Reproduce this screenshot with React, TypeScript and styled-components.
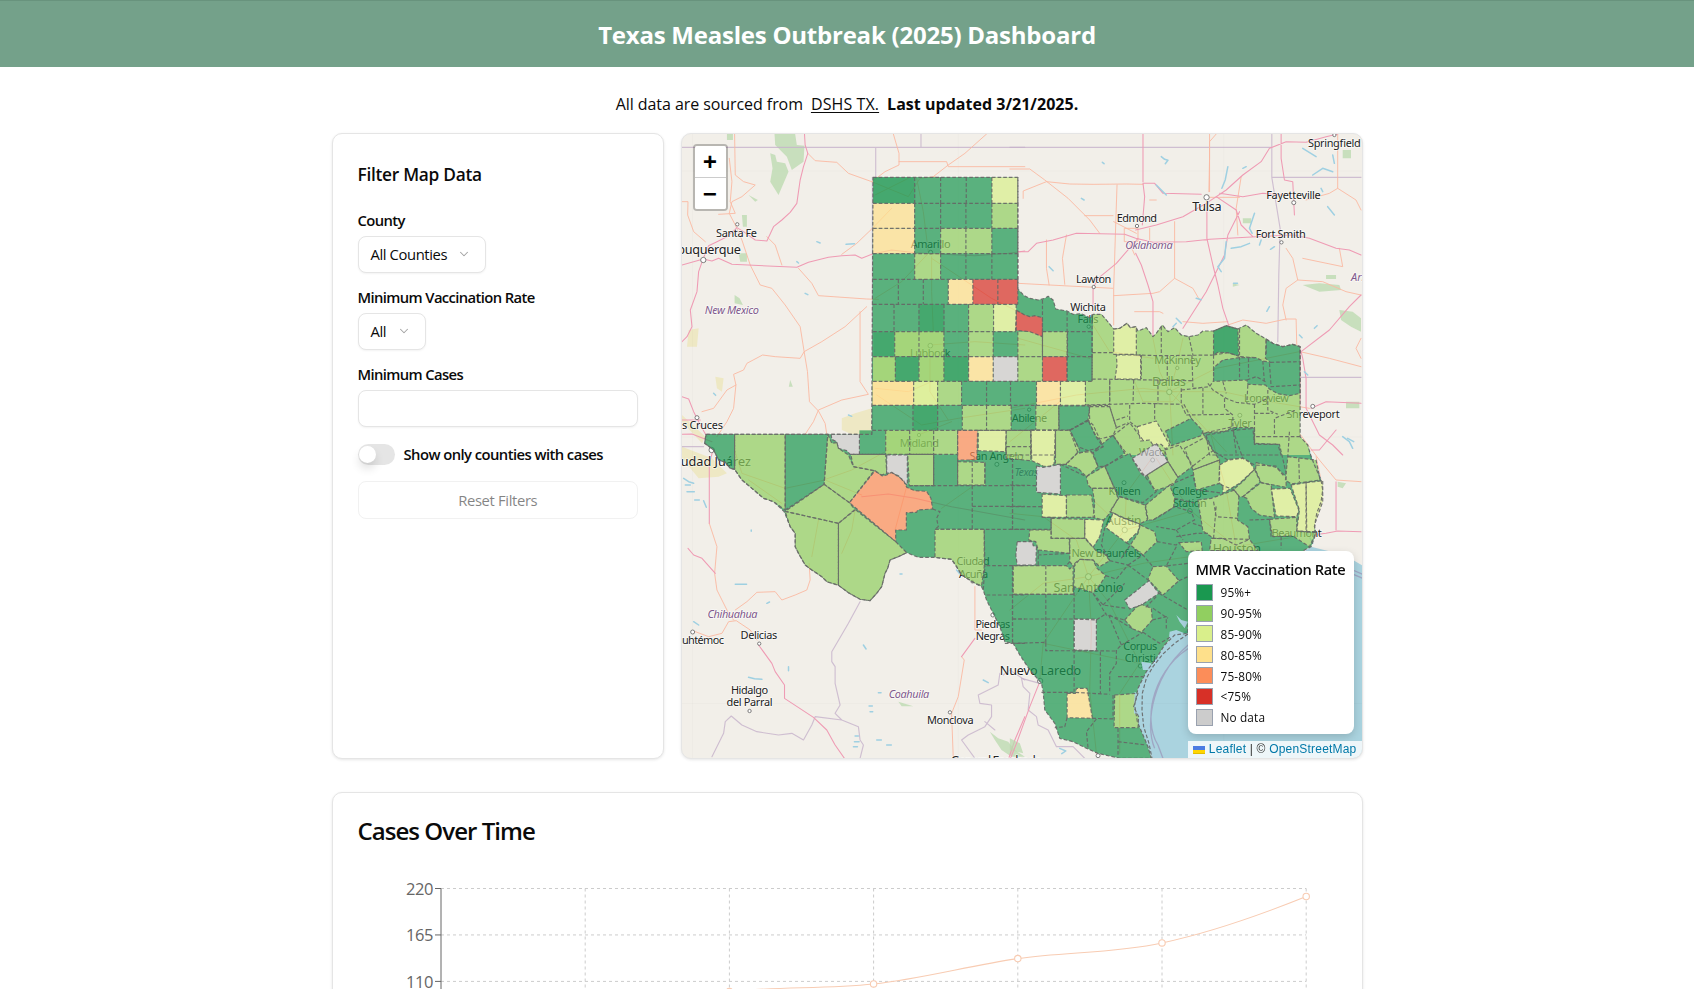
import React from 'react';
import styled, { createGlobalStyle } from 'styled-components';
import { ChevronDown } from 'lucide-react';

const GlobalStyle = createGlobalStyle`
  *, *::before, *::after { box-sizing: border-box; }
  body {
    margin: 0;
    background: #fff;
    color: #0a0a0a;
    font-family: "Segoe UI", "Open Sans", "Noto Sans", sans-serif;
    font-size: 15px;
  }
  button, input { font: inherit; color: inherit; }
`;

const Page = styled.div`
  height: 100vh;
  overflow: hidden;
`;

const Header = styled.header`
  height: 67px;
  display: flex;
  align-items: center;
  justify-content: center;
  padding-top: 1px;
  background: #74a18a;
  border-top: 1px solid #68937d;
  color: #fff;
`;

const Title = styled.h1`
  margin: 0;
  font-size: 24px;
  line-height: 32px;
  font-weight: 700;
  letter-spacing: -0.23px;
  white-space: nowrap;
`;

const Main = styled.main`
  width: 1031px;
  margin: 0 auto;
`;

const Source = styled.p`
  margin: 0;
  height: 66px;
  padding-top: 25px;
  line-height: 24px;
  display: flex;
  justify-content: center;
  gap: 8px;
  font-size: 16px;
  letter-spacing: -0.07px;
  white-space: nowrap;
  b { letter-spacing: 0.02px; }
  a { color: inherit; letter-spacing: 0.1px; text-decoration: underline; text-underline-offset: 2px; }
`;

const Columns = styled.div`
  display: grid;
  grid-template-columns: 332.5px 1fr;
  gap: 16.5px;
  height: 626px;
`;

const Card = styled.section`
  background: #fff;
  border: 1px solid #e5e5e5;
  border-radius: 10px;
  box-shadow: 0 1px 3px rgba(0, 0, 0, 0.1);
`;

const FilterCard = styled(Card)`
  padding: 29px 25px 0;
  display: flex;
  flex-direction: column;
  align-items: flex-start;
`;

const CardHeading = styled.h2`
  margin: 0 0 22px;
  font-size: 17.3px;
  line-height: 24px;
  font-weight: 600;
  letter-spacing: -0.27px;
`;

const Field = styled.div`
  width: 100%;
  height: 77px;
  display: flex;
  flex-direction: column;
  align-items: flex-start;
  gap: 5px;
`;

const Label = styled.label`
  font-size: 14.8px;
  line-height: 22px;
  font-weight: 600;
  letter-spacing: -0.62px;
  white-space: nowrap;
`;

const SwitchLabel = styled(Label)`
  letter-spacing: -0.56px;
`;

const SelectButton = styled.button<{ $width: number }>`
  width: ${(p) => p.$width}px;
  height: 37px;
  padding: 0 14px 1px 12px;
  display: flex;
  align-items: center;
  justify-content: space-between;
  background: #fff;
  border: 1px solid #e5e5e5;
  border-radius: 8px;
  box-shadow: 0 1px 2px rgba(0, 0, 0, 0.05);
  font-size: 14.8px;
  letter-spacing: -0.4px;
  white-space: nowrap;
  svg { color: #a3a3a3; }
`;

const NumberInput = styled.input`
  width: 100%;
  height: 37px;
  border: 1px solid #e5e5e5;
  border-radius: 8px;
  background: #fff;
  box-shadow: 0 1px 2px rgba(0, 0, 0, 0.05);
`;

const SwitchRow = styled.div`
  display: flex;
  align-items: center;
  gap: 9px;
  height: 22px;
  margin-top: 3px;
`;

const Switch = styled.span`
  width: 37px;
  height: 21px;
  padding: 2px 1px;
  border-radius: 11px;
  background: #e5e5e5;
`;

const Thumb = styled.span`
  display: block;
  width: 17px;
  height: 17px;
  border-radius: 50%;
  background: #fff;
  box-shadow: 0 6px 10px rgba(0, 0, 0, 0.12);
`;

const ResetButton = styled.button`
  width: 100%;
  height: 38px;
  margin-top: 16px;
  background: #fff;
  border: 1px solid #e5e5e5;
  border-radius: 8px;
  opacity: 0.5;
  font-size: 14.8px;
  font-weight: 500;
  letter-spacing: -0.35px;
`;

const MapCard = styled(Card)`
  position: relative;
  overflow: hidden;
  background: #f2efe9;
`;

const MapSvg = styled.svg`
  display: block;
  width: 100%;
  height: 100%;
`;

const ZoomControl = styled.div`
  position: absolute;
  top: 10px;
  left: 11px;
  width: 35px;
  border: 2px solid rgba(0, 0, 0, 0.24);
  background-clip: padding-box;
  border-radius: 4px;
  overflow: hidden;
`;

const ZoomButton = styled.button`
  display: flex;
  align-items: center;
  justify-content: center;
  width: 100%;
  height: 31px;
  padding: 4px 0 0;
  border: 0;
  background: #fff;
  font: bold 24px/27px "Liberation Mono", monospace;
  color: #000;
  & + & { border-top: 1px solid #ccc; height: 32px; }
`;

const Legend = styled.div`
  position: absolute;
  right: 8px;
  bottom: 24px;
  width: 166px;
  height: 183px;
  padding: 7px 8px;
  background: #fff;
  border-radius: 8px;
  box-shadow: 0 3px 8px rgba(0, 0, 0, 0.16);
`;

const LegendTitle = styled.div`
  font-size: 14.6px;
  line-height: 22px;
  font-weight: 600;
  letter-spacing: -0.4px;
  margin-bottom: 2px;
  white-space: nowrap;
`;

const LegendRow = styled.div`
  display: flex;
  align-items: center;
  gap: 8px;
  height: 20.8px;
  font-size: 11.8px;
  line-height: 20px;
  letter-spacing: 0.15px;
`;

const Swatch = styled.span<{ $color: string }>`
  width: 17px;
  height: 17px;
  background: ${(p) => p.$color};
  border: 1px solid #99a1af;
`;

const Attribution = styled.div`
  position: absolute;
  right: 0;
  bottom: 0;
  height: 17px;
  padding: 0 5px;
  display: flex;
  align-items: center;
  gap: 4px;
  background: rgba(255, 255, 255, 0.8);
  font: 12px/17px "Liberation Sans", sans-serif;
  letter-spacing: 0.2px;
  color: #333;
  white-space: pre;
  a { color: #0078a8; }
`;

const ChartCard = styled(Card)`
  margin-top: 33px;
  height: 480px;
  padding: 23px 25px;
`;

const ChartTitle = styled.h2`
  margin: 0;
  font-size: 24px;
  line-height: 30px;
  font-weight: 600;
  letter-spacing: -0.95px;
`;

const ChartSvg = styled.svg`
  display: block;
  width: 980px;
  height: 380px;
  margin-top: 27px;
  margin-left: -1px;
  text { font-size: 16.5px; fill: #666; letter-spacing: -0.4px; }
`;

/* ---------- map data ---------- */

// Each sheet covers one quarter of the map, in thirds of a pixel from its origin.
type Sheet = 'nw' | 'ne' | 'sw' | 'se';
const SHEETS: Sheet[] = ['nw', 'ne', 'sw', 'se'];
const ORIGIN: Record<Sheet, [number, number]> = {
  nw: [0, 0],
  ne: [1005, 0],
  sw: [0, 915],
  se: [1005, 915],
};

const RATE: Record<string, string> = {
  g: '#1a9850', D: '#1a9850', l: '#91cf60', L: '#91cf60', y: '#d9ef8b', Y: '#d9ef8b',
  o: '#fee08b', O: '#fee08b', c: '#fc8d59', r: '#d73027', n: '#cccccc',
};

const STATE =
  'M594,157 L1029,157 1029,492 1048,512 1065,520 1090,525 1110,520 1120,514 1135,525 1143,552 1177,558 1195,568 1220,566 1245,578 1255,568 1280,568 1295,585 1317,612 1335,610 1357,595 1367,608 1383,605 1390,618 1415,608 1435,635 1445,625 1463,600 1480,620 1500,608 1520,630 1543,635 1570,630 1585,618 1617,618 1655,602 1690,612 1715,600 1745,625 1775,642 1795,655 1825,665 1855,658 1877,665 1877,935 1900,960 1907,985 1920,1020 1940,1065 1945,1095 1940,1130 1927,1165 1920,1205 1925,1225 1910,1265 1890,1275 1800,1370 1640,1440 1540,1500 1540,1525 1500,1530 1470,1560 1445,1600 1415,1640 1390,1690 1380,1740 1388,1790 1405,1830 1420,1865 1430,1900 1335,1900 1269,1885 1235,1870 1195,1850 1155,1840 1140,1795 1110,1755 1105,1700 1100,1675 1065,1635 1035,1590 1015,1555 990,1550 975,1505 955,1465 935,1425 925,1395 920,1385 900,1375 860,1350 845,1325 830,1303 800,1300 780,1297 730,1297 695,1283 670,1295 645,1305 638,1330 630,1345 620,1385 605,1405 585,1427 555,1423 520,1403 490,1381 455,1370 440,1355 425,1345 410,1335 390,1320 370,1285 360,1265 360,1225 345,1205 327,1160 295,1130 265,1120 230,1090 200,1065 178,1033 165,1030 150,1012 130,1005 115,975 88,955 92,928 590,928 Z';

type Row = [number, number, number[], string];
const GRID: Row[] = [
  [157, 235, [594, 719, 797, 874, 951, 1029], 'Dgggy'],
  [235, 310, [594, 719, 797, 873, 951, 1029], 'ogggl'],
  [310, 386, [594, 719, 797, 873, 951, 1029], 'ogllg'],
  [386, 463, [594, 719, 797, 873, 951, 1029], 'glggg'],
  [463, 538, [594, 670, 745, 820, 894, 969, 1029], 'gggorr'],
  [538, 620, [594, 657, 732, 807, 881, 956, 1024], 'ggDgly'],
  [620, 695, [594, 659, 732, 807, 881, 955, 1029, 1103, 1178, 1252], 'DLLglgllg'],
  [695, 769, [594, 661, 732, 807, 881, 955, 1029, 1103, 1177, 1252], 'LDLDonlrg'],
  [769, 841, [592, 716, 788, 860, 935, 1007, 1085, 1157, 1232, 1305], 'OYlgggoyl'],
  [841, 916, [592, 714, 788, 862, 935, 1009, 1083, 1152], 'gDgllgl'],
  [916, 988, [553, 632, 704, 776, 848], 'gLLl'],
];

const AREAS: Record<Sheet, [string, string][]> = {
  nw: [],
  ne: [
    ['l', '250,568 275,568 290,585 312,612 330,610 352,595 362,608 378,605 385,618 410,608 430,635 440,625 458,600 475,620 495,608 515,630 538,635 565,630 580,618 612,618 650,602 685,612 710,600 740,625 770,642 790,655 820,665 850,658 872,665 872,935 895,960 902,990 137,990 137,916 180,916 240,885 240,845 227,843 227,769 247,769'],
    ['r', '20,556 45,570 60,575 75,572 98,578 98,635 60,620 17,616'],
    ['D', '612,618 650,602 685,612 687,693 655,683 625,682 612,690'],
    ['g', '770,642 790,655 820,665 850,658 872,665 872,805 840,812 805,806 780,792 768,780 715,778 712,765 612,769 612,728 640,705 690,698 740,698 760,708 783,712 768,700'],
    ['y', '312,612 330,610 352,595 362,608 380,605 380,688 312,688'],
    ['y', '320,690 393,690 393,762 316,762 322,720'],
    ['g', '147,843 238,843 240,885 180,916 148,916'],
    ['l', '240,845 300,845 320,908 310,932 270,942 250,900 235,885'],
    ['g', '180,916 235,885 258,935 270,942 280,965 205,985'],
    ['y', '383,905 440,888 455,915 480,960 468,972 455,958 430,960 420,945 393,948'],
    ['g', '468,918 545,880 580,918 575,932 485,962'],
    ['g', '590,930 640,922 670,908 730,908 735,958 805,958 815,990 600,990'],
    ['l', '-11,916 63,916 63,990 -11,990'],
    ['y', '63,916 137,916 137,990 63,990'],
  ],
  sw: [
    ['g', '92,13 178,13 178,118 165,115 150,97 130,90 115,60 88,40'],
    ['l', '178,13 330,13 330,240 295,215 265,205 230,175 200,150 178,118'],
    ['g', '330,13 458,13 447,163 330,240'],
    ['l', '458,13 470,40 485,38 490,55 520,75 535,110 597,122 523,218 447,163'],
    ['l', '527,73 632,73 635,130 620,135 597,122 535,110'],
    ['n', '468,13 553,13 553,73 525,73 515,62 490,55 485,35 470,28'],
    ['n', '635,75 697,75 697,165 690,160 670,137 650,128 635,130'],
    ['l', '698,73 776,73 776,167 703,167'],
    ['c', '848,1 908,1 906,90 848,90'],
    ['y', '910,1 994,1 992,65 910,62'],
    ['l', '848,95 930,97 930,165 848,165'],
    ['c', '600,122 622,138 635,135 650,127 685,150 695,172 720,182 755,184 768,205 773,237 728,240 725,247 694,248 694,300 662,300 662,335 523,218'],
    ['l', '447,163 523,218 540,240 490,280 330,244'],
    ['l', '330,244 490,280 490,466 455,455 440,440 425,430 410,420 390,405 370,370 360,350 360,310 345,290'],
    ['l', '490,280 540,238 662,335 695,368 670,380 645,390 638,415 630,430 620,470 605,490 585,512 555,508 520,488 490,466'],
    ['l', '780,298 928,298 928,410 920,467 900,460 860,435 845,410 830,388 780,382'],
  ],
  se: [
    ['l', '-11,50 63,50 63,92 -11,85'],
    ['y', '63,0 137,0 133,102 120,110 100,108 66,92'],
    ['l', '137,0 180,0 210,60 170,103 137,103'],
    ['n', '80,108 100,112 152,103 152,192 80,187'],
    ['y', '97,192 170,197 170,262 97,262'],
    ['l', '170,195 245,195 255,262 170,262'],
    ['l', '124,265 225,268 225,325 124,325'],
    ['l', '60,300 124,300 124,325 178,325 180,370 85,360 78,335 57,330'],
    ['y', '225,268 282,270 270,320 250,352 225,322'],
    ['l', '248,175 315,175 325,205 300,250 282,270 250,262 255,220'],
    ['l', '330,200 406,225 413,270 390,282 330,258 300,245'],
    ['y', '310,248 330,260 390,282 385,305 350,338 287,292 300,275'],
    ['l', '392,285 435,305 442,335 400,375 362,345 385,310'],
    ['l', '180,325 225,325 250,352 262,365 285,372 300,392 270,410 250,390 210,388 192,410 180,395'],
    ['l', '195,400 210,388 250,390 262,415 288,437 270,465 250,488 192,470'],
    ['l', '10,407 170,407 180,417 190,407 190,493 10,493'],
    ['n', '22,335 68,335 70,347 80,350 78,405 22,405 18,375'],
    ['g', '180,0 235,-30 262,25 280,50 250,68 205,50'],
    ['l', '170,100 205,68 245,65 265,110 230,140 205,115 170,105'],
    ['g', '262,55 310,15 345,70 290,108 265,110 250,68'],
    ['g', '285,108 360,70 370,90 405,138 440,185 400,218 330,200 310,165'],
    ['l', '230,140 285,108 310,165 312,175 245,175 235,165'],
    ['n', '368,85 440,40 475,95 405,140 390,125'],
    ['l', '412,135 475,95 505,142 490,165 435,182'],
    ['l', '408,225 480,165 495,205 492,232 430,270 415,270'],
    ['l', '465,60 510,45 550,108 505,142 475,95'],
    ['l', '525,55 590,20 610,60 630,90 550,120'],
    ['g', '580,10 735,-5 735,40 810,43 830,130 820,135 800,108 735,105 700,85 655,90 610,62'],
    ['l', '550,120 630,90 630,160 560,180'],
    ['y', '630,105 660,88 700,84 720,95 735,118 690,160 640,190 640,165 628,160'],
    ['l', '735,118 752,155 700,200 690,200 672,178 700,155'],
    ['l', '740,98 800,112 830,140 830,172 755,158 738,120'],
    ['l', '565,210 605,205 675,180 688,200 684,270 715,290 720,328 680,345 640,325 612,325 580,303'],
    ['l', '700,200 755,158 785,165 795,262 750,255 725,235 712,205'],
    ['y', '785,177 842,175 868,240 862,260 800,258'],
    ['y', '845,165 890,158 892,305 862,303 870,240'],
    ['y', '890,158 940,152 940,215 917,280 915,305 890,305'],
    ['l', '780,268 862,262 862,303 920,308 900,350 850,318 790,320'],
    ['l', '835,80 920,90 932,150 845,162 828,150'],
    ['l', '605,325 720,328 745,362 600,362'],
    ['l', '508,338 575,335 578,362 530,365'],
    ['l', '430,410 470,408 508,452 460,495 415,448'],
    ['n', '345,510 418,452 448,490 395,525 360,537'],
    ['l', '345,570 380,532 395,523 425,535 428,570 395,607 370,597'],
    ['n', '193,567 260,567 260,662 193,660'],
    ['o', '172,790 197,790 200,775 232,775 248,865 172,863'],
    ['l', '315,795 385,790 372,830 387,860 385,893 313,893'],
  ],
};

// County borders between areas of the same rate.
const BORDERS: Record<Sheet, string> = {
  nw: '',
  ne: 'M98,525V695 M172,560V770 M247,568V769 M98,620H247 M455,605V688 M538,635L550,690 M395,690V762 M473,690V762 M547,690L550,790 M612,690V765 M380,690L450,692 612,690 M247,683H312 M247,762L550,767 M300,765V838 M372,765L370,838 M445,765V838 M227,840L300,838 400,835 515,838 M515,790V838L530,870 M515,795L580,788 M550,790L600,785 612,767 M580,788V870 M530,870L665,868 M595,775L610,795 650,820 680,832 735,838 775,820 M640,770L650,805 M715,780L712,835 M735,838V935H795 M775,795V855L805,868 M735,865L790,865 M872,935H795V880L860,855 M300,845L320,908 355,893 M320,885L355,873 M360,840V890L380,905 M435,838V885 M645,820V850L670,870V905L580,925 M523,838L545,880 M690,695V765 M717,700V755 M760,708L765,775 M780,715L785,785 870,780 M783,712L870,710 M612,690L655,683 687,693 M690,612V695L740,698 M770,642V690 M712,765L740,755 768,770 M670,908L680,985 M310,932L350,985 M310,932L360,893 400,945 M735,940V958',
  sw: 'M703,167H1050 M892,167V298 M892,229H1050 M780,298H1050 M773,237L795,245 785,265 790,290 780,298 M928,298L930,410 925,480 M935,407H1050 M935,495H1050 M1013,85V298 M930,97V165 M1013,407V640 M1013,567H1050 M990,640H1050 M892,97V167 M776,73V167 M848,165V73',
  se: 'M0,165L80,167 M0,230H97 M8,85V298 M0,298H124V262 M97,262H125 M8,407V640 M10,493H193 M108,407V640 M8,567H193 M8,640L108,637V662L320,663 M193,470V785 M95,787H193L300,793 M272,665V790 M297,555L335,645 320,660V700L300,730V790 M250,490L290,555 345,570 M193,567L260,570 290,550 M280,525L345,460 M250,490L280,525 350,535 M355,405L418,452 M355,405L400,375 430,410 M300,392L355,405 M288,437L320,447 355,405 M442,335L500,345 508,338 M152,103L230,140 M285,292L275,345 300,392 M350,338L362,345 335,385 M325,740H400 M248,865L315,867 M260,867L230,905 235,955 M172,863L165,890 135,893 M325,895V980 M325,935L410,945 M430,535L475,565 M448,490L535,540 M400,607L450,640 485,620 M500,350L470,408 535,400 M508,452L535,440 M430,270L465,250 495,230 545,245 555,270 500,300 440,290 M500,300L520,330 M550,280L580,290 M495,205L560,220 M480,165L550,135 560,180 M440,500L405,535 M428,570L470,560V600 M300,555L370,597 M335,645L400,607 M310,795V865 M85,360V407 M180,395L170,407 M180,370L85,375 M675,180L635,165 M612,215L620,260 685,265 M612,325L620,225 M720,270L780,268 785,320 M815,320V355 M868,85L870,155 M735,40V0 M670,0L700,85 M840,5L835,80 M550,108L610,62 M500,320L560,310 600,310 M570,180L640,190 M535,612L495,640 460,672 430,710 410,745 398,790 397,840 402,890 418,940 427,985',
};

const LINES: Record<Sheet, { trunk: string; major: string; border: string }> = {
  nw: {
    trunk: 'M388,27L390,60 398,85 385,125 375,165 370,200 365,235 345,262 320,285 295,305 275,348 240,345 205,320 185,308 155,335 125,350 100,362 84,400 70,440 65,500 45,555 50,605 35,635 20,650 M20,420L84,402 110,408 130,400 170,418 365,427 400,412 460,397 500,392 540,390 560,400 590,388 650,375 720,383 800,388 900,392 1000,385 1050,378 M20,815L40,822 55,860 75,900 95,935 M20,885H75',
    major: 'M178,27L180,150 205,170 240,180 200,215 170,230 162,265 180,300 200,345 225,420 255,480 290,490 330,540 375,605 387,680 397,740 403,830 430,858 450,895 455,928 M162,100L170,170 165,230 180,265 130,268 M398,85L420,107 485,112 520,145 590,170 700,215 735,160 780,155 M655,27L672,85 672,120 630,140 590,170 M672,110H815L820,125H1050 M935,27L870,85 820,120 775,155 M275,335L300,360 320,420 M370,430L410,475 430,512 575,522 610,523 M500,388L545,355 590,312 650,250 M575,545L510,605 440,650 387,680 375,700 300,695 262,690 215,715 205,735 175,748 182,780 175,850 155,890 125,935 M555,560V770L580,808 500,825 430,855 415,890 390,928 M80,860L115,850 155,795 182,780 M20,230H38L37,270 55,320 90,350 M725,160L745,260 760,380 M770,395L770,500 775,620 M765,700L765,800 820,885 M600,520L680,470 760,385 M600,210L700,160 M600,790L700,800 770,770 M605,810L740,900 850,880 1050,850 M770,400L860,460 950,520 1050,570 M765,660L900,650 1050,660 M730,930L830,890',
    border: 'M20,67H1050 M602,67V157 M738,27V67 M592,157V928',
  },
  ne: {
    trunk: 'M400,27V170 M400,175H435L460,205 575,208 M400,175L405,215 398,300 M25,380H55L80,355 130,345 200,325 345,328 378,340 430,352 530,350 600,343 740,335 850,330 900,340 980,370 1020,375 1055,390 M378,385L395,420 415,480 430,530 430,635 M378,315L440,300 520,275 590,235 650,195 700,150 755,110 780,70 830,50 890,52 950,35 985,27 M815,27V100L825,165 850,170 855,270 M620,215L680,255 695,300 730,335 M592,235V340L610,420 625,480 640,550 660,608 M630,205L700,215 760,205 820,210 M690,260L655,330 645,390 620,440 590,500 520,610 M385,340L320,415 265,460 250,490V540 M1055,510L1020,545 960,615 875,680 880,700 890,760 890,850 905,880 930,930 970,960 1000,990 M905,850L950,830 1055,835 M872,670V840',
    major: 'M0,132H60L105,165 175,220 240,285 270,325 M40,220V198L110,170 180,177 250,178 350,177 400,178 M225,272H310 M312,290L380,325 M322,180L318,300 312,490 312,600 M110,345V430L118,480 M25,475L120,480 310,490 M170,330L158,400 165,478 M495,290V460L450,500 430,505 312,512 M495,460L550,490 570,525 M600,27L600,100 598,200 M375,560L450,560 460,565 M420,225H440 M620,27L600,50V200 M600,217H690 M695,155L680,250 685,330 M985,27V190L960,205 890,225 M985,190L1040,225 1055,255 M880,400L1000,425 990,370 M830,370L850,400 865,465 830,490 820,540 830,585 M865,465L940,470 1010,500 1055,510 M655,600L700,585 770,595 830,582H860L862,660 M520,590L580,595 655,590 M872,680L960,700 1055,725 M1055,640L1040,670 1055,700 M25,640L240,700 M250,600L300,680 430,700 M0,850L200,810 400,790 480,800 640,800 780,830 900,850 M430,640L450,740 480,800 490,990 M520,640L500,730 480,800 M380,800H500 M375,770L400,830 490,830 520,790 M480,800L540,860 650,980 M480,800L620,730 770,700 870,680 M0,950L150,830 M345,310H385V350H345Z M420,310V345 M360,355L375,390',
    border: 'M0,67H787 M787,27V157L812,310 808,450 805,650 M787,157H1055 M872,757H1055',
  },
  sw: {
    trunk: 'M112,65L102,100V280 M20,13L50,12 110,35 M38,355L55,375 80,385 120,430 M250,645L290,700 300,725 328,765V805L415,862 455,900 480,945 508,985 M900,625L860,680 M1050,860L1020,930 1000,990 M560,200L640,192 720,205 830,230 1050,270',
    major: 'M102,280L125,350 118,430 125,480 160,550 175,570 M180,540L215,515 245,487 300,485 320,510 360,495 395,480 405,450 402,400 M60,605L100,620 140,610 160,575 183,572 225,600 245,630 M900,470V600L920,600 M860,680L868,690 850,800 830,850 835,985 M178,60L200,130 330,175 450,150 560,195 M430,270L410,380 M540,240L530,300 500,370 M445,150L530,120 640,60 M695,170L660,300 M220,150L320,220 M892,170L800,235',
    border: 'M20,50H85 M555,515L520,580 470,665V695L480,710V760L495,825 480,850 500,870 550,890 555,930 565,945 555,985 M500,870L420,860 410,885 385,930 350,910 310,915 245,905 200,885 168,858 150,875 145,910 110,980 M975,730L970,765 910,795 915,820 950,825 950,860 930,890 880,915 860,930 900,985 M930,875L960,900 M1050,750L1005,720 985,735',
  },
  se: {
    trunk: 'M88,760L60,830 20,940 0,990 M910,315L950,310 985,303 1055,305 M980,155V300 M905,60L930,60 980,0',
    major: 'M870,10L930,90 980,150 1055,155 M920,80L935,150 M0,250L100,260 200,330 236,440 M430,80L350,190 345,300 236,440 100,640 90,750 M236,440L400,400 682,360 M236,440L300,520 390,700 M236,440L100,460 0,540 M440,85L540,240 680,350 M600,0L650,180 680,350 860,320 M250,210L345,300 540,245 M236,440L245,600 240,780 260,970 M390,700L330,790 330,970 M100,640L390,700',
    border: 'M90,760L35,745 40,770 60,790 55,840 80,860 85,885 115,900 140,950 190,950 230,990',
  },
};

const LAKES: Record<Sheet, string> = {
  nw: 'M425,350l10,4 M513,358l25,-2 M390,505l8,4 M115,805l6,6 M365,410l5,4 M520,870l10,4',
  ne: 'M455,95l10,8 10,3 -8,10 M278,112l5,4 M215,220l8,5 M118,425l12,12 M655,125l-8,40 -10,25 M700,130l10,-5 M880,70l40,25 M910,150l30,-20 30,10 M970,90l5,25 M935,190l5,10 M735,265l-15,45 8,15 M650,350l-5,50 -20,25 10,15 M665,370l30,-5 25,-10 M755,345l-5,15 M795,365l-12,8 M780,545l-8,14 M870,630l8,8 M500,580l15,15 M490,605l10,-10 M672,475h12 M915,610l8,-8 M885,740l10,10 M1015,940l18,10 M440,180l30,30 M955,245l20,25 M560,520l15,4',
  sw: 'M25,145l15,10 15,5 M30,165h15 M35,185h22 M58,210h14 M85,212l8,20 M180,463h34 M275,520l8,-4 M55,575l15,10 M220,742l18,4 22,2 M565,645l8,12 M610,788h8 M582,828h10 M585,845h8 M540,918h10 M538,935h14 M535,950h12 M605,930h14 M635,945h14 M925,750l15,8 M340,710v12 M228,300v4 M675,432h6 M845,420l10,12',
  se: 'M150,955l18,8 -12,8 M900,65l5,20 20,35 8,30 M890,300l20,40 M1000,20l20,15 10,20',
};

const WOODS: Record<Sheet, string> = {
  nw: 'M298,27H360L365,60 388,62 385,110 350,135 335,95 300,60Z M285,85L300,90 305,110 330,115 340,140 310,210 285,170 292,130Z M200,270h15v35h-12z M178,510l15,10 10,20 -25,-5z M155,27h18v18h-18z M220,210l28,15 -8,5z M190,385h25v25h-20z M345,765l8,20 -12,0z',
  ne: 'M880,480L930,475 990,480 995,495 930,500z M950,450h30v12h-30z M1000,75h25v25h-25z M670,475l20,5 -20,5z M990,555l40,5 25,20v40l-30,-15 -30,-20z M700,280h25v15h-25z M1010,830h40v20h-40z',
  sw: 'M945,905l25,20 30,10 20,25 30,20 -40,0 -30,-20 -20,-30z M670,815l20,6 25,8 -35,0z',
  se: 'M0,925l30,15 10,30 -40,-10z M985,155l25,5 -10,15 -15,-5z',
};

const SCRUB = 'M500,880L540,865 590,850V928H530L500,915Z M40,615L70,610 65,665 35,665Z M120,755L145,760 140,800 125,790Z M20,965L110,1000 155,1045 130,1055 70,1060 20,1000Z M20,870 L90,935 80,955 20,890Z';

const TOWNS: Record<Sheet, [number, number, number][]> = {
  nw: [[186, 298, 5], [84, 405, 8], [65, 878, 6], [767, 382, 6], [766, 662, 7], [732, 930, 5]],
  ne: [[591, 217, 8], [382, 303, 5], [252, 486, 5], [853, 233, 6], [816, 352, 5], [975, 30, 5], [237, 605, 5], [503, 729, 5], [479, 801, 8], [691, 871, 6], [910, 844, 6], [58, 854, 5]],
  sw: [[109, 60, 8], [52, 606, 6], [252, 641, 5], [223, 843, 5], [825, 847, 5], [954, 555, 6], [966, 103, 6], [892, 455, 4]],
  se: [[429, 90, 6], [343, 158, 6], [541, 243, 7], [345, 300, 8], [236, 440, 9], [91, 753, 8], [392, 708, 6], [265, 977, 6]],
};

type LabelSpec = { t: string; x: number; y: number; w?: number; s?: number; region?: boolean; a?: 'start' | 'end' };
const LABELS: Record<Sheet, LabelSpec[]> = {
  nw: [
    { t: 'Santa Fe', x: 184, y: 335, w: 123 }, { t: 'Albuquerque', x: 197, y: 388, s: 38, w: 224, a: 'end' },
    { t: 'New Mexico', x: 170, y: 566, w: 163, region: true }, { t: 'Las Cruces', x: 143, y: 912, w: 157, a: 'end' },
    { t: 'Amarillo', x: 767, y: 369, w: 120 }, { t: 'Lubbock', x: 766, y: 697, w: 122 }, { t: 'Midland', x: 733, y: 966, w: 118 },
  ],
  ne: [
    { t: 'Springfield', x: 975, y: 66, w: 158 }, { t: 'Fayetteville', x: 852, y: 221, w: 164 },
    { t: 'Tulsa', x: 592, y: 258, w: 88, s: 38 }, { t: 'Edmond', x: 382, y: 292, w: 121 },
    { t: 'Oklahoma', x: 418, y: 373, w: 143, region: true }, { t: 'Fort Smith', x: 814, y: 339, w: 150 },
    { t: 'Lawton', x: 252, y: 473, w: 106 }, { t: 'Wichita', x: 235, y: 558, w: 107 }, { t: 'Falls', x: 235, y: 595, w: 63 },
    { t: 'Arkansas', x: 1025, y: 469, region: true, a: 'start' }, { t: 'McKinney', x: 504, y: 716, w: 140 },
    { t: 'Dallas', x: 478, y: 783, w: 102, s: 38 }, { t: 'Longview', x: 771, y: 832, w: 135 }, { t: 'Tyler', x: 692, y: 907, w: 70 },
    { t: 'Shreveport', x: 911, y: 879, w: 160 }, { t: 'Abilene', x: 59, y: 891, w: 107 },
  ],
  sw: [
    { t: 'Ciudad Juárez', x: 227, y: 108, s: 38, w: 245, a: 'end' }, { t: 'San Angelo', x: 965, y: 91, w: 163 },
    { t: 'Ciudad', x: 895, y: 406, w: 100 }, { t: 'Acuña', x: 896, y: 443, w: 88 },
    { t: 'Chihuahua', x: 172, y: 564, w: 150, region: true }, { t: 'Delicias', x: 251, y: 627, w: 110 },
    { t: 'Cuauhtémoc', x: 146, y: 642, w: 180, a: 'end' }, { t: 'Hidalgo', x: 223, y: 791, w: 112 },
    { t: 'del Parral', x: 223, y: 829, w: 138 }, { t: 'Coahuila', x: 702, y: 803, w: 122, region: true },
    { t: 'Monclova', x: 826, y: 881, w: 140 }, { t: 'Piedras', x: 954, y: 593, w: 105 }, { t: 'Negras', x: 954, y: 630, w: 103 },
    { t: 'General Escobedo', x: 965, y: 1005, w: 275, s: 37 },
  ],
  se: [
    { t: 'Texas', x: 50, y: 138, w: 72, region: true }, { t: 'Waco', x: 428, y: 77, w: 80 }, { t: 'Killeen', x: 345, y: 195, w: 97 },
    { t: 'College', x: 541, y: 195, w: 107 }, { t: 'Station', x: 541, y: 231, w: 102 }, { t: 'Austin', x: 342, y: 284, w: 108, s: 38 },
    { t: 'Beaumont', x: 862, y: 320, w: 150 }, { t: 'New Braunfels', x: 290, y: 382, w: 210 },
    { t: 'Houston', x: 682, y: 368, w: 145, s: 38 }, { t: 'San Antonio', x: 236, y: 485, w: 210, s: 38 },
    { t: 'Corpus', x: 392, y: 660, w: 102 }, { t: 'Christi', x: 392, y: 696, w: 94 }, { t: 'Nuevo Laredo', x: 92, y: 736, w: 245, s: 38 },
  ],
};

const MapLabel = styled.text<{ $region?: boolean }>`
  font-family: "Noto Sans", sans-serif;
  font-style: ${(p) => (p.$region ? 'italic' : 'normal')};
  fill: ${(p) => (p.$region ? '#80598c' : '#222')};
  stroke: rgba(255, 255, 255, 0.6);
  stroke-width: 5px;
  stroke-linejoin: round;
  paint-order: stroke;
`;

const gridCells = GRID.flatMap(([y0, y1, xs, codes]) =>
  codes.split('').map((code, i): [string, string] => [code, `${xs[i]},${y0} ${xs[i + 1]},${y0} ${xs[i + 1]},${y1} ${xs[i]},${y1}`]),
);

// One stroke per shared grid edge keeps the dashes from filling each other in.
const gridLines = GRID.map(([y0, y1, xs]) =>
  `M${xs[0]},${y1}H${xs[xs.length - 1]} ${xs.slice(1).map((x) => `M${x},${y0}V${y1}`).join('')}`,
).join(' ');

const EachSheet = ({ children }: { children: (s: Sheet) => React.ReactNode }) => (
  <>
    {SHEETS.map((s) => (
      <g key={s} transform={`translate(${ORIGIN[s][0]} ${ORIGIN[s][1]})`}>{children(s)}</g>
    ))}
  </>
);

const areasOf = (s: Sheet) => (s === 'nw' ? gridCells : AREAS[s]);
const outlinedAreasOf = (s: Sheet) => (s === 'ne' ? AREAS.ne.slice(1) : AREAS[s]);

const TexasMap = () => (
  <MapSvg viewBox="20 27 2043 1872" preserveAspectRatio="none" role="img" aria-label="Map of Texas counties">
    <path d={SCRUB} fill="#eee8c4" />
    <path d="M2070,1325 L2010,1290 1910,1265 1540,1515 1500,1535 1470,1560 1445,1600 1415,1640 1390,1690 1388,1790 1420,1865 1432,1900 H2070Z" fill="#aad3df" />
    <path d="M1560,1560 C1440,1620 1400,1780 1450,1860 L1465,1900 M1560,1545 C1430,1640 1410,1800 1440,1870 M2035,1335 L2070,1350 M2030,1345 L2070,1362" fill="none" stroke="#9a94b8" strokeWidth="4" opacity="0.7" />
    <path d="M20,138H2070 M52,27V1900 M850,27V1900 M1648,27V1900 M20,936H2070 M20,1735H2070" stroke="#000" strokeOpacity="0.035" strokeWidth="2" />
    <g fill="none" strokeLinejoin="round" strokeLinecap="round">
      <EachSheet>{(s) => (
        <>
          <path d={WOODS[s]} fill="#b9d9ad" opacity="0.75" />
          <path d={LINES[s].border} stroke="#c5b2ca" strokeWidth="3.4" opacity="0.8" />
          <path d={LINES[s].major} stroke="#fbb9a2" strokeWidth="2.7" />
          <path d={LINES[s].trunk} stroke="#ef9bb4" strokeWidth="3.2" />
          <path d={LAKES[s]} stroke="#9fd0e2" strokeWidth="4.5" />
        </>
      )}</EachSheet>
    </g>
    <EachSheet>{(s) => (
      <>
        {TOWNS[s].map(([x, y, r]) => (
          <circle key={`${x}-${y}`} cx={x} cy={y} r={r} fill="#fff" stroke="#666" strokeWidth="2.5" />
        ))}
        {LABELS[s].map((l) => (
          <MapLabel key={l.t} $region={l.region} x={l.x} y={l.y} fontSize={l.s ?? 33} textAnchor={l.a ?? 'middle'} textLength={l.w}>
            {l.t}
          </MapLabel>
        ))}
      </>
    )}</EachSheet>
    <g opacity="0.7">
      <path d={STATE} fill={RATE.g} />
      <EachSheet>{(s) => areasOf(s).map(([c, pts], i) => <polygon key={i} points={pts} fill={RATE[c]} />)}</EachSheet>
    </g>
    <g opacity="0.32">
      <EachSheet>{(s) => areasOf(s).filter(([c]) => 'DLYO'.includes(c)).map(([c, pts], i) => <polygon key={i} points={pts} fill={RATE[c]} />)}</EachSheet>
    </g>
    <g fill="#aad3df">
      <path d="M1505,1470l15,15 20,5 -10,20 -15,-20z M1485,1520l20,-5 25,10 -20,20 -28,2z M1400,1610l30,5 -5,20 -20,0z M1380,1700l15,10 -5,60 -12,-5z" />
    </g>
    <g fill="none" stroke="#666" strokeWidth="3.5" strokeDasharray="11 6" opacity="0.9" strokeLinejoin="round">
      <path d={STATE} />
      <path d={gridLines} />
      <EachSheet>{(s) => (
        <>
          {outlinedAreasOf(s).map(([, pts], i) => <polygon key={i} points={pts} />)}
          <path d={BORDERS[s]} />
        </>
      )}</EachSheet>
    </g>
  </MapSvg>
);

const LEGEND: [string, string][] = [
  ['95%+', RATE.g], ['90-95%', RATE.l], ['85-90%', RATE.y], ['80-85%', RATE.o],
  ['75-80%', RATE.c], ['<75%', RATE.r], ['No data', RATE.n],
];

/* ---------- chart ---------- */

const STEP = 144.2;
const LEFT = 84;
const CASES = [24, 48, 98, 107, 137, 155.5, 210.5];
const pointX = (i: number) => LEFT + i * STEP;
const pointY = (v: number) => 15.5 + (220 - v) * 0.8445;

const slopes = CASES.map((v, i) => {
  if (i === 0) return CASES[1] - v;
  if (i === CASES.length - 1) return (v - CASES[i - 1]) * 1.25;
  const a = v - CASES[i - 1];
  const b = CASES[i + 1] - v;
  return Math.min(a, b, 0.25 * (a + b)) * 2;
});
const curve = CASES.slice(1).reduce((d, v, i) => {
  const x0 = pointX(i);
  const x1 = pointX(i + 1);
  return `${d}C${x0 + STEP / 3},${pointY(CASES[i] + slopes[i] / 3)} ${x1 - STEP / 3},${pointY(v - slopes[i + 1] / 3)} ${x1},${pointY(v)}`;
}, `M${pointX(0)},${pointY(CASES[0])}`);

const CasesChart = () => (
  <ChartSvg viewBox="0 0 980 380">
    <g stroke="#ccc" strokeDasharray="3 3">
      {[220, 165, 110, 55, 0].map((v) => <line key={v} x1={LEFT} x2={pointX(6)} y1={pointY(v)} y2={pointY(v)} />)}
      {[1, 2, 3, 4, 5, 6].map((i) => <line key={i} x1={pointX(i)} x2={pointX(i)} y1={15.5} y2={pointY(0)} />)}
    </g>
    <path d={`M${LEFT},15.5V${pointY(0)}`} stroke="#666" />
    {[220, 165, 110, 55, 0].map((v) => (
      <g key={v}>
        <line x1={LEFT - 6} x2={LEFT} y1={pointY(v)} y2={pointY(v)} stroke="#666" />
        <text x={LEFT - 8} y={pointY(v) + 6.5} textAnchor="end">{v}</text>
      </g>
    ))}
    <path d={curve} fill="none" stroke="#f8ccb3" strokeWidth="1.1" />
    {CASES.map((v, i) => <circle key={i} cx={pointX(i)} cy={pointY(v)} r="3.2" fill="#fff" stroke="#f8ccb3" strokeWidth="1.1" />)}
  </ChartSvg>
);

export default function App() {
  return (
    <Page>
      <GlobalStyle />
      <Header>
        <Title>Texas Measles Outbreak (2025) Dashboard</Title>
      </Header>
      <Main>
        <Source>
          <span>All data are sourced from</span>
          <a>DSHS TX.</a>
          <b>Last updated 3/21/2025.</b>
        </Source>
        <Columns>
          <FilterCard>
            <CardHeading>Filter Map Data</CardHeading>
            <Field>
              <Label>County</Label>
              <SelectButton $width={128}>All Counties<ChevronDown size={14} strokeWidth={1.8} /></SelectButton>
            </Field>
            <Field>
              <Label>Minimum Vaccination Rate</Label>
              <SelectButton $width={68}>All<ChevronDown size={14} strokeWidth={1.8} /></SelectButton>
            </Field>
            <Field>
              <Label>Minimum Cases</Label>
              <NumberInput />
            </Field>
            <SwitchRow>
              <Switch><Thumb /></Switch>
              <SwitchLabel>Show only counties with cases</SwitchLabel>
            </SwitchRow>
            <ResetButton>Reset Filters</ResetButton>
          </FilterCard>
          <MapCard>
            <TexasMap />
            <ZoomControl>
              <ZoomButton>+</ZoomButton>
              <ZoomButton>−</ZoomButton>
            </ZoomControl>
            <Legend>
              <LegendTitle>MMR Vaccination Rate</LegendTitle>
              {LEGEND.map(([name, color]) => (
                <LegendRow key={name}><Swatch $color={color} />{name}</LegendRow>
              ))}
            </Legend>
            <Attribution>
              <svg width="12" height="8" viewBox="0 0 12 8"><path fill="#4c7be1" d="M0 0h12v4H0z" /><path fill="#ffd500" d="M0 4h12v3H0z" /><path fill="#e0bc00" d="M0 7h12v1H0z" /></svg>
              <span><a>Leaflet</a> | © <a>OpenStreetMap</a></span>
            </Attribution>
          </MapCard>
        </Columns>
        <ChartCard>
          <ChartTitle>Cases Over Time</ChartTitle>
          <CasesChart />
        </ChartCard>
      </Main>
    </Page>
  );
}
